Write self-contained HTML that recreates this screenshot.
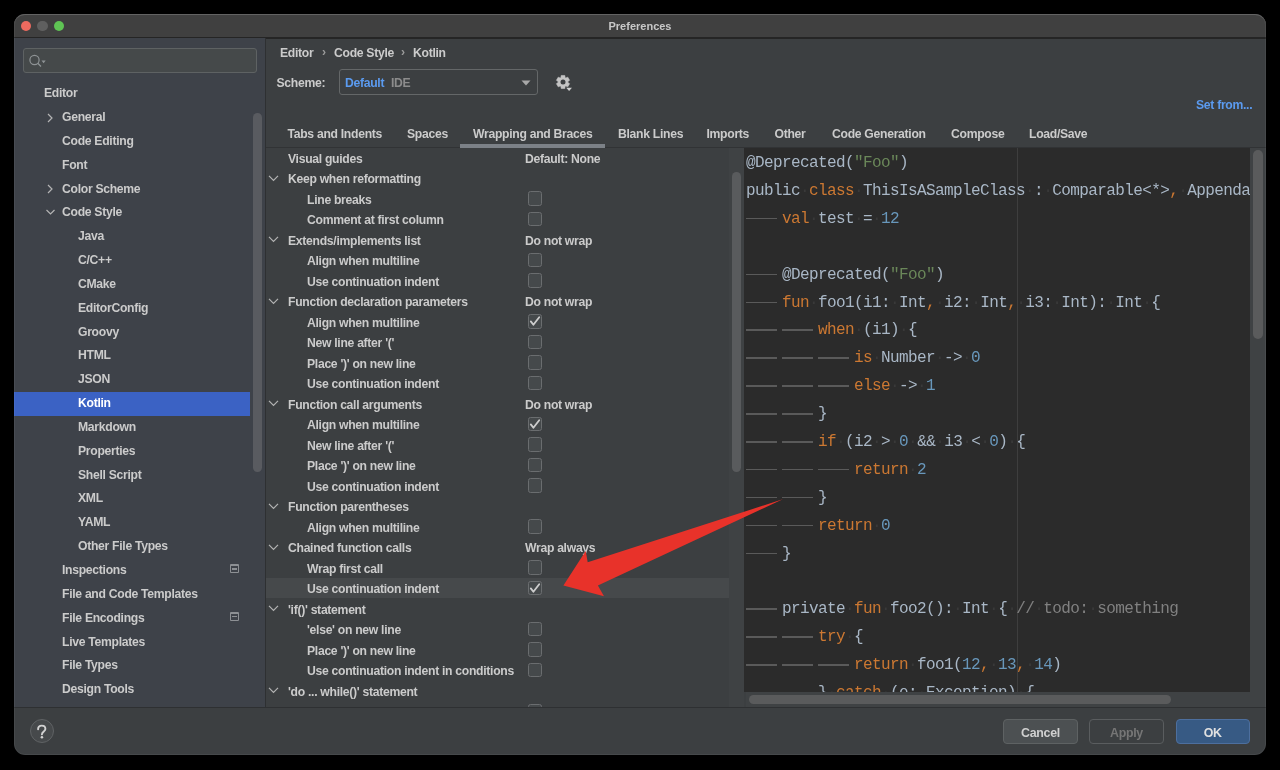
<!DOCTYPE html><html><head><meta charset="utf-8"><style>
*{margin:0;padding:0;box-sizing:border-box}
html,body{width:1280px;height:770px;background:#000;overflow:hidden}
body{position:relative;font-family:"Liberation Sans", sans-serif;font-weight:bold;font-size:12.2px;letter-spacing:-0.3px;color:#cbcbcb}
#wrap{position:absolute;left:0;top:0;width:1280px;height:770px;will-change:transform}
.a{position:absolute}
.t{position:absolute;white-space:pre;line-height:20px;height:20px}
#win{position:absolute;left:14px;top:14px;width:1252px;height:741.3px;border-radius:11px;overflow:hidden;background:#3c3f41}
.cb{position:absolute;width:14px;height:14.5px;border:1.2px solid #6a6d6f;border-radius:2.5px;background:#45494b}
.chev{position:absolute}
.code{position:absolute;left:746px;font-family:"Liberation Mono", monospace;font-size:16px;letter-spacing:-0.6px;white-space:pre;line-height:20px;height:20px;color:#a9b7c6;font-weight:normal}
.w{color:#393939} .k{color:#cc7832} .n{color:#6897bb} .s{color:#6a8759} .c{color:#808080}
.btn{position:absolute;height:25px;border-radius:4px;text-align:center;line-height:26px;font-size:12.4px}
</style></head><body><div id="wrap"><div id="win"></div>
<div class="a" style="left:14px;top:14px;width:1252px;height:23px;background:#404040;border-radius:11px 11px 0 0;border-top:1px solid #5a5a5a"></div>
<div class="a" style="left:14px;top:37px;width:1252px;height:1.6px;background:#252525"></div>
<div class="a" style="left:20.8px;top:20.8px;width:10.4px;height:10.4px;border-radius:50%;background:#ee6a5f"></div>
<div class="a" style="left:37.4px;top:20.8px;width:10.4px;height:10.4px;border-radius:50%;background:#5f5f5f"></div>
<div class="a" style="left:53.8px;top:20.8px;width:10.4px;height:10.4px;border-radius:50%;background:#5fc454"></div>
<div class="t" style="left:0;width:1280px;text-align:center;top:16px;font-size:11px;letter-spacing:0;color:#c8c8c8">Preferences</div>
<div class="a" style="left:14px;top:38px;width:251px;height:669px;background:#3e4249"></div>
<div class="a" style="left:265px;top:38px;width:1px;height:669px;background:#2e3032"></div>
<div class="a" style="left:23px;top:48px;width:234px;height:25px;border:1px solid #5e6263;border-radius:3px;background:#45494a"></div>
<svg class="a" style="left:26px;top:50.6px" width="24" height="20" viewBox="0 0 24 20"><circle cx="8.5" cy="9" r="4.6" fill="none" stroke="#8e9395" stroke-width="1.2"/><line x1="11.8" y1="12.3" x2="15" y2="15.5" stroke="#8e9395" stroke-width="1.3"/><path d="M15.5 9.6 L19.7 9.6 L17.6 12.2Z" fill="#8e9395"/></svg>
<div class="t" style="left:44px;top:83.18px;color:#cbcbcb">Editor</div>
<div class="t" style="left:62px;top:107.02px;color:#cbcbcb">General</div>
<svg class="a" style="left:45px;top:111.92px" width="10" height="12" viewBox="0 0 10 12"><path d="M3 2 L7 6 L3 10" fill="none" stroke="#b4b4b4" stroke-width="1.2"/></svg>
<div class="t" style="left:62px;top:130.86px;color:#cbcbcb">Code Editing</div>
<div class="t" style="left:62px;top:154.70px;color:#cbcbcb">Font</div>
<div class="t" style="left:62px;top:178.54px;color:#cbcbcb">Color Scheme</div>
<svg class="a" style="left:45px;top:183.44px" width="10" height="12" viewBox="0 0 10 12"><path d="M3 2 L7 6 L3 10" fill="none" stroke="#b4b4b4" stroke-width="1.2"/></svg>
<div class="t" style="left:62px;top:202.38px;color:#cbcbcb">Code Style</div>
<svg class="a" style="left:45px;top:205.78px" width="12" height="12" viewBox="0 0 12 12"><path d="M1.5 4 L5.5 8 L9.5 4" fill="none" stroke="#b4b4b4" stroke-width="1.2"/></svg>
<div class="t" style="left:78px;top:226.22px;color:#cbcbcb">Java</div>
<div class="t" style="left:78px;top:250.06px;color:#cbcbcb">C/C++</div>
<div class="t" style="left:78px;top:273.90px;color:#cbcbcb">CMake</div>
<div class="t" style="left:78px;top:297.74px;color:#cbcbcb">EditorConfig</div>
<div class="t" style="left:78px;top:321.58px;color:#cbcbcb">Groovy</div>
<div class="t" style="left:78px;top:345.42px;color:#cbcbcb">HTML</div>
<div class="t" style="left:78px;top:369.26px;color:#cbcbcb">JSON</div>
<div class="a" style="left:14px;top:392px;width:236px;height:24px;background:#3b62c4"></div>
<div class="t" style="left:78px;top:393.10px;color:#ffffff">Kotlin</div>
<div class="t" style="left:78px;top:416.94px;color:#cbcbcb">Markdown</div>
<div class="t" style="left:78px;top:440.78px;color:#cbcbcb">Properties</div>
<div class="t" style="left:78px;top:464.62px;color:#cbcbcb">Shell Script</div>
<div class="t" style="left:78px;top:488.46px;color:#cbcbcb">XML</div>
<div class="t" style="left:78px;top:512.30px;color:#cbcbcb">YAML</div>
<div class="t" style="left:78px;top:536.14px;color:#cbcbcb">Other File Types</div>
<div class="t" style="left:62px;top:559.98px;color:#cbcbcb">Inspections</div>
<div class="a" style="left:230px;top:564.38px;width:9px;height:8.5px;border:1px solid #8d9094;border-top-width:2px;border-radius:1px"><div class="a" style="left:1px;top:1.8px;width:4.5px;height:1.6px;background:#8d9094"></div></div>
<div class="t" style="left:62px;top:583.82px;color:#cbcbcb">File and Code Templates</div>
<div class="t" style="left:62px;top:607.66px;color:#cbcbcb">File Encodings</div>
<div class="a" style="left:230px;top:612.06px;width:9px;height:8.5px;border:1px solid #8d9094;border-top-width:2px;border-radius:1px"><div class="a" style="left:1px;top:1.8px;width:4.5px;height:1.6px;background:#8d9094"></div></div>
<div class="t" style="left:62px;top:631.50px;color:#cbcbcb">Live Templates</div>
<div class="t" style="left:62px;top:655.34px;color:#cbcbcb">File Types</div>
<div class="t" style="left:62px;top:679.18px;color:#cbcbcb">Design Tools</div>
<div class="a" style="left:252.6px;top:112.6px;width:9.7px;height:359.7px;border-radius:5px;background:#595b60"></div>
<div class="t" style="left:280px;top:42.5px">Editor</div>
<div class="t" style="left:322px;top:41.5px;color:#9a9a9a">›</div>
<div class="t" style="left:334px;top:42.5px">Code Style</div>
<div class="t" style="left:401px;top:41.5px;color:#9a9a9a">›</div>
<div class="t" style="left:413px;top:42.5px">Kotlin</div>
<div class="t" style="left:276.5px;top:73px">Scheme:</div>
<div class="a" style="left:339.3px;top:69px;width:199px;height:26px;border:1px solid #646768;border-radius:3px;background:#3c3f41"></div>
<div class="t" style="left:345px;top:73px;color:#5b9bf0">Default</div>
<div class="t" style="left:391px;top:73px;color:#8c8c8c">IDE</div>
<svg class="a" style="left:520px;top:78.7px" width="12" height="8" viewBox="0 0 12 8"><path d="M1.5 1.5 L10.5 1.5 L6 6.5Z" fill="#a8a8a8"/></svg>
<svg class="a" style="left:552.5px;top:71.9px" width="21" height="21" viewBox="0 0 21 21"><path d="M7.91 5.57 L8.19 3.45 L11.81 3.45 L12.09 5.57 L12.80 5.98 L14.77 5.15 L16.58 8.29 L14.88 9.59 L14.88 10.41 L16.58 11.71 L14.77 14.85 L12.80 14.02 L12.09 14.43 L11.81 16.55 L8.19 16.55 L7.91 14.43 L7.20 14.02 L5.23 14.85 L3.42 11.71 L5.12 10.41 L5.12 9.59 L3.42 8.29 L5.23 5.15 L7.20 5.98Z" fill="#c4c4c4" stroke="#c4c4c4" stroke-width="0.6" stroke-linejoin="round"/><circle cx="10" cy="10" r="2.5" fill="#3c3f41"/><path d="M13.2 15.8 L19 15.8 L16.1 19.1Z" fill="#d0d0d0" stroke="#3c3f41" stroke-width="0.8" paint-order="stroke"/></svg>
<div class="t" style="left:1196px;top:95px;color:#5b9bf0">Set from...</div>
<div class="t" style="left:287.5px;top:124px">Tabs and Indents</div>
<div class="t" style="left:407px;top:124px">Spaces</div>
<div class="t" style="left:473px;top:124px">Wrapping and Braces</div>
<div class="t" style="left:618px;top:124px">Blank Lines</div>
<div class="t" style="left:706.5px;top:124px">Imports</div>
<div class="t" style="left:774.5px;top:124px">Other</div>
<div class="t" style="left:832px;top:124px">Code Generation</div>
<div class="t" style="left:951px;top:124px">Compose</div>
<div class="t" style="left:1029px;top:124px">Load/Save</div>
<div class="a" style="left:266px;top:146.5px;width:1000px;height:1.5px;background:#313335"></div>
<div class="a" style="left:460px;top:144px;width:145px;height:4px;background:#7c8187"></div>
<div class="a" style="left:266px;top:147px;width:478px;height:560px;overflow:hidden">
<div class="t" style="left:22px;top:1.50px">Visual guides</div>
<div class="t" style="left:259px;top:1.50px">Default: None</div>
<div class="t" style="left:22px;top:22.00px">Keep when reformatting</div>
<svg class="a" style="left:1px;top:25.50px" width="12" height="10" viewBox="0 0 12 10"><path d="M2 2.8 L6.5 7.3 L11 2.8" fill="none" stroke="#b4b4b4" stroke-width="1.2"/></svg>
<div class="t" style="left:41px;top:42.50px">Line breaks</div>
<div class="cb" style="left:262px;top:44.00px"></div>
<div class="t" style="left:41px;top:63.00px">Comment at first column</div>
<div class="cb" style="left:262px;top:64.50px"></div>
<div class="t" style="left:22px;top:83.50px">Extends/implements list</div>
<svg class="a" style="left:1px;top:87.00px" width="12" height="10" viewBox="0 0 12 10"><path d="M2 2.8 L6.5 7.3 L11 2.8" fill="none" stroke="#b4b4b4" stroke-width="1.2"/></svg>
<div class="t" style="left:259px;top:83.50px">Do not wrap</div>
<div class="t" style="left:41px;top:104.00px">Align when multiline</div>
<div class="cb" style="left:262px;top:105.50px"></div>
<div class="t" style="left:41px;top:124.50px">Use continuation indent</div>
<div class="cb" style="left:262px;top:126.00px"></div>
<div class="t" style="left:22px;top:145.00px">Function declaration parameters</div>
<svg class="a" style="left:1px;top:148.50px" width="12" height="10" viewBox="0 0 12 10"><path d="M2 2.8 L6.5 7.3 L11 2.8" fill="none" stroke="#b4b4b4" stroke-width="1.2"/></svg>
<div class="t" style="left:259px;top:145.00px">Do not wrap</div>
<div class="t" style="left:41px;top:165.50px">Align when multiline</div>
<div class="cb" style="left:262px;top:167.00px"></div>
<svg class="a" style="left:262px;top:167.00px" width="14" height="14" viewBox="0 0 14 14"><path d="M2.8 7.4 L5.4 10.8 L11.2 3.2" fill="none" stroke="#cdcdcd" stroke-width="1.8" stroke-linecap="round" stroke-linejoin="round"/></svg>
<div class="t" style="left:41px;top:186.00px">New line after &#x27;(&#x27;</div>
<div class="cb" style="left:262px;top:187.50px"></div>
<div class="t" style="left:41px;top:206.50px">Place &#x27;)&#x27; on new line</div>
<div class="cb" style="left:262px;top:208.00px"></div>
<div class="t" style="left:41px;top:227.00px">Use continuation indent</div>
<div class="cb" style="left:262px;top:228.50px"></div>
<div class="t" style="left:22px;top:247.50px">Function call arguments</div>
<svg class="a" style="left:1px;top:251.00px" width="12" height="10" viewBox="0 0 12 10"><path d="M2 2.8 L6.5 7.3 L11 2.8" fill="none" stroke="#b4b4b4" stroke-width="1.2"/></svg>
<div class="t" style="left:259px;top:247.50px">Do not wrap</div>
<div class="t" style="left:41px;top:268.00px">Align when multiline</div>
<div class="cb" style="left:262px;top:269.50px"></div>
<svg class="a" style="left:262px;top:269.50px" width="14" height="14" viewBox="0 0 14 14"><path d="M2.8 7.4 L5.4 10.8 L11.2 3.2" fill="none" stroke="#cdcdcd" stroke-width="1.8" stroke-linecap="round" stroke-linejoin="round"/></svg>
<div class="t" style="left:41px;top:288.50px">New line after &#x27;(&#x27;</div>
<div class="cb" style="left:262px;top:290.00px"></div>
<div class="t" style="left:41px;top:309.00px">Place &#x27;)&#x27; on new line</div>
<div class="cb" style="left:262px;top:310.50px"></div>
<div class="t" style="left:41px;top:329.50px">Use continuation indent</div>
<div class="cb" style="left:262px;top:331.00px"></div>
<div class="t" style="left:22px;top:350.00px">Function parentheses</div>
<svg class="a" style="left:1px;top:353.50px" width="12" height="10" viewBox="0 0 12 10"><path d="M2 2.8 L6.5 7.3 L11 2.8" fill="none" stroke="#b4b4b4" stroke-width="1.2"/></svg>
<div class="t" style="left:41px;top:370.50px">Align when multiline</div>
<div class="cb" style="left:262px;top:372.00px"></div>
<div class="t" style="left:22px;top:391.00px">Chained function calls</div>
<svg class="a" style="left:1px;top:394.50px" width="12" height="10" viewBox="0 0 12 10"><path d="M2 2.8 L6.5 7.3 L11 2.8" fill="none" stroke="#b4b4b4" stroke-width="1.2"/></svg>
<div class="t" style="left:259px;top:391.00px">Wrap always</div>
<div class="t" style="left:41px;top:411.50px">Wrap first call</div>
<div class="cb" style="left:262px;top:413.00px"></div>
<div class="a" style="left:0;top:430.50px;width:463px;height:20.7px;background:#46494b"></div>
<div class="t" style="left:41px;top:432.00px">Use continuation indent</div>
<div class="cb" style="left:262px;top:433.50px"></div>
<svg class="a" style="left:262px;top:433.50px" width="14" height="14" viewBox="0 0 14 14"><path d="M2.8 7.4 L5.4 10.8 L11.2 3.2" fill="none" stroke="#cdcdcd" stroke-width="1.8" stroke-linecap="round" stroke-linejoin="round"/></svg>
<div class="t" style="left:22px;top:452.50px">&#x27;if()&#x27; statement</div>
<svg class="a" style="left:1px;top:456.00px" width="12" height="10" viewBox="0 0 12 10"><path d="M2 2.8 L6.5 7.3 L11 2.8" fill="none" stroke="#b4b4b4" stroke-width="1.2"/></svg>
<div class="t" style="left:41px;top:473.00px">&#x27;else&#x27; on new line</div>
<div class="cb" style="left:262px;top:474.50px"></div>
<div class="t" style="left:41px;top:493.50px">Place &#x27;)&#x27; on new line</div>
<div class="cb" style="left:262px;top:495.00px"></div>
<div class="t" style="left:41px;top:514.00px">Use continuation indent in conditions</div>
<div class="cb" style="left:262px;top:515.50px"></div>
<div class="t" style="left:22px;top:534.50px">&#x27;do ... while()&#x27; statement</div>
<svg class="a" style="left:1px;top:538.00px" width="12" height="10" viewBox="0 0 12 10"><path d="M2 2.8 L6.5 7.3 L11 2.8" fill="none" stroke="#b4b4b4" stroke-width="1.2"/></svg>
<div class="t" style="left:41px;top:555.00px">&#x27;while&#x27; on new line</div>
<div class="cb" style="left:262px;top:556.50px"></div>
</div>
<div class="a" style="left:729px;top:147px;width:15px;height:560px;background:#3f4244"></div>
<div class="a" style="left:731.7px;top:171.7px;width:9.3px;height:300.8px;border-radius:5px;background:#595b5d"></div>
<div class="a" style="left:744px;top:147px;width:506px;height:545px;background:#2b2b2b;overflow:hidden">
<div class="a" style="left:273px;top:0;width:1px;height:545px;background:#3e3e3e"></div>
</div>
<div class="a" style="left:1250px;top:147px;width:16px;height:560px;background:#3f4244"></div>
<div class="a" style="left:1252.7px;top:149.7px;width:10.6px;height:189.3px;border-radius:5px;background:#5a5b5c"></div>
<div class="a" style="left:746px;top:692px;width:504px;height:15px;background:#3f4244"></div>
<div class="a" style="left:748.8px;top:694.7px;width:422px;height:9.5px;border-radius:5px;background:#5a5b5c"></div>
<div class="a" style="left:744px;top:147px;width:506px;height:545px;overflow:hidden">
<div class="code" style="left:2px;top:6.00px">@Deprecated(<span class="s">&quot;Foo&quot;</span>)</div>
<div class="code" style="left:2px;top:33.90px">public<span class="w">·</span><span class="k">class<span class="w">·</span></span>ThisIsASampleClass<span class="w">·</span>:<span class="w">·</span>Comparable&lt;*&gt;<span class="k">,<span class="w">·</span></span>Appendable</div>
<div class="a" style="left:2px;top:70.80px;width:31px;height:1.6px;background:#5a5a5a"></div>
<div class="code" style="left:38px;top:61.80px"><span class="k">val<span class="w">·</span></span>test<span class="w">·</span>=<span class="w">·</span><span class="n">12</span></div>
<div class="a" style="left:2px;top:126.60px;width:31px;height:1.6px;background:#5a5a5a"></div>
<div class="code" style="left:38px;top:117.60px">@Deprecated(<span class="s">&quot;Foo&quot;</span>)</div>
<div class="a" style="left:2px;top:154.50px;width:31px;height:1.6px;background:#5a5a5a"></div>
<div class="code" style="left:38px;top:145.50px"><span class="k">fun<span class="w">·</span></span>foo1(i1:<span class="w">·</span>Int<span class="k">,<span class="w">·</span></span>i2:<span class="w">·</span>Int<span class="k">,<span class="w">·</span></span>i3:<span class="w">·</span>Int):<span class="w">·</span>Int<span class="w">·</span>{</div>
<div class="a" style="left:2px;top:182.40px;width:31px;height:1.6px;background:#5a5a5a"></div>
<div class="a" style="left:38px;top:182.40px;width:31px;height:1.6px;background:#5a5a5a"></div>
<div class="code" style="left:74px;top:173.40px"><span class="k">when<span class="w">·</span></span>(i1)<span class="w">·</span>{</div>
<div class="a" style="left:2px;top:210.30px;width:31px;height:1.6px;background:#5a5a5a"></div>
<div class="a" style="left:38px;top:210.30px;width:31px;height:1.6px;background:#5a5a5a"></div>
<div class="a" style="left:74px;top:210.30px;width:31px;height:1.6px;background:#5a5a5a"></div>
<div class="code" style="left:110px;top:201.30px"><span class="k">is<span class="w">·</span></span>Number<span class="w">·</span>-&gt;<span class="w">·</span><span class="n">0</span></div>
<div class="a" style="left:2px;top:238.20px;width:31px;height:1.6px;background:#5a5a5a"></div>
<div class="a" style="left:38px;top:238.20px;width:31px;height:1.6px;background:#5a5a5a"></div>
<div class="a" style="left:74px;top:238.20px;width:31px;height:1.6px;background:#5a5a5a"></div>
<div class="code" style="left:110px;top:229.20px"><span class="k">else<span class="w">·</span></span>-&gt;<span class="w">·</span><span class="n">1</span></div>
<div class="a" style="left:2px;top:266.10px;width:31px;height:1.6px;background:#5a5a5a"></div>
<div class="a" style="left:38px;top:266.10px;width:31px;height:1.6px;background:#5a5a5a"></div>
<div class="code" style="left:74px;top:257.10px">}</div>
<div class="a" style="left:2px;top:294.00px;width:31px;height:1.6px;background:#5a5a5a"></div>
<div class="a" style="left:38px;top:294.00px;width:31px;height:1.6px;background:#5a5a5a"></div>
<div class="code" style="left:74px;top:285.00px"><span class="k">if<span class="w">·</span></span>(i2<span class="w">·</span>&gt;<span class="w">·</span><span class="n">0</span><span class="w">·</span>&amp;&amp;<span class="w">·</span>i3<span class="w">·</span>&lt;<span class="w">·</span><span class="n">0</span>)<span class="w">·</span>{</div>
<div class="a" style="left:2px;top:321.90px;width:31px;height:1.6px;background:#5a5a5a"></div>
<div class="a" style="left:38px;top:321.90px;width:31px;height:1.6px;background:#5a5a5a"></div>
<div class="a" style="left:74px;top:321.90px;width:31px;height:1.6px;background:#5a5a5a"></div>
<div class="code" style="left:110px;top:312.90px"><span class="k">return<span class="w">·</span></span><span class="n">2</span></div>
<div class="a" style="left:2px;top:349.80px;width:31px;height:1.6px;background:#5a5a5a"></div>
<div class="a" style="left:38px;top:349.80px;width:31px;height:1.6px;background:#5a5a5a"></div>
<div class="code" style="left:74px;top:340.80px">}</div>
<div class="a" style="left:2px;top:377.70px;width:31px;height:1.6px;background:#5a5a5a"></div>
<div class="a" style="left:38px;top:377.70px;width:31px;height:1.6px;background:#5a5a5a"></div>
<div class="code" style="left:74px;top:368.70px"><span class="k">return<span class="w">·</span></span><span class="n">0</span></div>
<div class="a" style="left:2px;top:405.60px;width:31px;height:1.6px;background:#5a5a5a"></div>
<div class="code" style="left:38px;top:396.60px">}</div>
<div class="a" style="left:2px;top:461.40px;width:31px;height:1.6px;background:#5a5a5a"></div>
<div class="code" style="left:38px;top:452.40px">private<span class="w">·</span><span class="k">fun<span class="w">·</span></span>foo2():<span class="w">·</span>Int<span class="w">·</span>{<span class="w">·</span><span class="c">//<span class="w">·</span>todo:<span class="w">·</span>something</span></div>
<div class="a" style="left:2px;top:489.30px;width:31px;height:1.6px;background:#5a5a5a"></div>
<div class="a" style="left:38px;top:489.30px;width:31px;height:1.6px;background:#5a5a5a"></div>
<div class="code" style="left:74px;top:480.30px"><span class="k">try<span class="w">·</span></span>{</div>
<div class="a" style="left:2px;top:517.20px;width:31px;height:1.6px;background:#5a5a5a"></div>
<div class="a" style="left:38px;top:517.20px;width:31px;height:1.6px;background:#5a5a5a"></div>
<div class="a" style="left:74px;top:517.20px;width:31px;height:1.6px;background:#5a5a5a"></div>
<div class="code" style="left:110px;top:508.20px"><span class="k">return<span class="w">·</span></span>foo1(<span class="n">12</span><span class="k">,<span class="w">·</span></span><span class="n">13</span><span class="k">,<span class="w">·</span></span><span class="n">14</span>)</div>
<div class="a" style="left:2px;top:545.10px;width:31px;height:1.6px;background:#5a5a5a"></div>
<div class="a" style="left:38px;top:545.10px;width:31px;height:1.6px;background:#5a5a5a"></div>
<div class="code" style="left:74px;top:536.10px">}<span class="w">·</span><span class="k">catch<span class="w">·</span></span>(e:<span class="w">·</span>Exception)<span class="w">·</span>{</div>
</div>
<div class="a" style="left:14px;top:707px;width:1252px;height:1px;background:#2e3032"></div>
<div class="a" style="left:29.75px;top:719.4px;width:24px;height:24px;border-radius:50%;border:1px solid #5f6264;background:#46494b"></div>
<svg class="a" style="left:0;top:700px" width="80" height="60" viewBox="0 700 80 60"><path d="M38.1 729.2 C38.1 726.7 39.8 725.6 41.75 725.6 C43.8 725.6 45.4 726.9 45.4 728.9 C45.4 731.3 41.9 731.6 41.9 734.4" fill="none" stroke="#d2d2d2" stroke-width="1.9" stroke-linecap="round"/><circle cx="41.9" cy="737.2" r="1.3" fill="#d2d2d2"/></svg>
<div class="btn" style="left:1003px;top:719px;width:75px;background:#4c5052;border:1px solid #5e6263;color:#d0d0d0">Cancel</div>
<div class="btn" style="left:1089px;top:719px;width:75px;background:#3c3f41;border:1px solid #5a5d5f;color:#767676">Apply</div>
<div class="btn" style="left:1175.5px;top:719px;width:74.5px;background:#375a84;border:1px solid #4d6f9e;color:#e0e0e0">OK</div>
<div class="a" style="left:266px;top:146.5px;width:1000px;height:1.5px;background:#313335"></div>
<div class="a" style="left:460px;top:144px;width:145px;height:4px;background:#7c8187"></div>
<div class="a" style="left:14px;top:14px;width:1252px;height:741.3px;border-radius:11px;border:1px solid rgba(255,255,255,0.055)"></div>
<svg class="a" style="left:0;top:0" width="1280" height="770" viewBox="0 0 1280 770"><path d="M782.7 499.3 L587.7 562.3 L585.7 551.1 L563.4 585.6 L604 596.2 L597.9 585.6 Z" fill="#e8322a"/></svg></div></body></html>
